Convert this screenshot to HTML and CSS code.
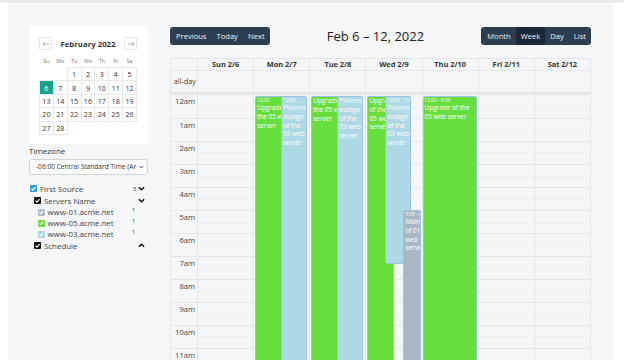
FILE: index.html
```html
<!DOCTYPE html>
<html>
<head>
	<link rel="stylesheet" href="styles.css">
</head>
<body>
	<div class="topbar"></div>
	<div class="page">
		<aside class="side">
			<div class="mini">
				<div class="mini-head">
					<span class="arrow"><svg viewBox="0 0 9 6" width="8" height="6"><path d="M8.5 3H1M3.5 0.6L1 3l2.5 2.4" fill="none" stroke="#999" stroke-width="0.8"/></svg></span>
					<b>February 2022</b>
					<span class="arrow"><svg viewBox="0 0 9 6" width="8" height="6"><path d="M0.5 3H8M5.5 0.6L8 3 5.5 5.4" fill="none" stroke="#999" stroke-width="0.8"/></svg></span>
				</div>
				<table class="mini-grid">
					<tr class="dow"><th>Su</th><th>Mo</th><th>Tu</th><th>We</th><th>Th</th><th>Fr</th><th>Sa</th></tr>
					<tr><td class="empty"></td><td class="empty"></td><td>1</td><td>2</td><td>3</td><td>4</td><td>5</td></tr>
					<tr><td class="sel">6</td><td>7</td><td>8</td><td>9</td><td>10</td><td>11</td><td>12</td></tr>
					<tr><td>13</td><td>14</td><td>15</td><td>16</td><td>17</td><td>18</td><td>19</td></tr>
					<tr><td>20</td><td>21</td><td>22</td><td>23</td><td>24</td><td>25</td><td>26</td></tr>
					<tr><td>27</td><td>28</td><td class="empty"></td><td class="empty"></td><td class="empty"></td><td class="empty"></td><td class="empty"></td></tr>
				</table>
			</div>

			<div class="tz-label">Timezone</div>
			<div class="tz-select">
				<span>-06:00 Central Standard Time (America/Chicago)</span>
				<svg viewBox="0 0 8 5" width="5" height="4"><polyline points="1,1 4,4 7,1" fill="none" stroke="#333" stroke-width="1.4"/></svg>
			</div>

			<div class="tree">
				<div class="node lvl0">
					<span class="cb cb-blue"><svg viewBox="0 0 8 8"><polyline points="1.8,4.2 3.4,5.8 6.4,2.4" fill="none" stroke="#fff" stroke-width="1.3"/></svg></span>
					First Source
					<span class="right"><span class="count">3</span><svg class="chev" viewBox="0 0 8 5"><polyline points="1,1 4,4 7,1"/></svg></span>
				</div>
				<div class="node lvl1">
					<span class="cb cb-black"><svg viewBox="0 0 8 8"><polyline points="1.8,4.2 3.4,5.8 6.4,2.4" fill="none" stroke="#fff" stroke-width="1.3"/></svg></span>
					Servers Name
					<span class="right"><svg class="chev" viewBox="0 0 8 5"><polyline points="1,1 4,4 7,1"/></svg></span>
				</div>
				<div class="leaf">
					<span class="cb small cb-slate"><svg viewBox="0 0 8 8"><polyline points="1.8,4.2 3.4,5.8 6.4,2.4" fill="none" stroke="#fff" stroke-width="1.3"/></svg></span>
					www-01.acme.net
					<span class="right"><span class="count up">1</span></span>
				</div>
				<div class="leaf">
					<span class="cb small cb-green"><svg viewBox="0 0 8 8"><polyline points="1.8,4.2 3.4,5.8 6.4,2.4" fill="none" stroke="#fff" stroke-width="1.3"/></svg></span>
					www-05.acme.net
					<span class="right"><span class="count up">1</span></span>
				</div>
				<div class="leaf">
					<span class="cb small cb-light"><svg viewBox="0 0 8 8"><polyline points="1.8,4.2 3.4,5.8 6.4,2.4" fill="none" stroke="#fff" stroke-width="1.3"/></svg></span>
					www-03.acme.net
					<span class="right"><span class="count up">1</span></span>
				</div>
				<div class="node lvl1">
					<span class="cb cb-black"><svg viewBox="0 0 8 8"><polyline points="1.8,4.2 3.4,5.8 6.4,2.4" fill="none" stroke="#fff" stroke-width="1.3"/></svg></span>
					Schedule
					<span class="right"><svg class="chev" viewBox="0 0 8 5"><polyline points="1,4 4,1 7,4"/></svg></span>
				</div>
			</div>
		</aside>

		<main class="cal">
			<div class="toolbar">
				<div class="btn-group">
					<span class="btn">Previous</span><span class="btn">Today</span><span class="btn">Next</span>
				</div>
				<h2 class="title">Feb 6 – 12, 2022</h2>
				<div class="btn-group">
					<span class="btn">Month</span><span class="btn active">Week</span><span class="btn">Day</span><span class="btn">List</span>
				</div>
			</div>

			<div class="grid">
				<div class="row head">
					<div class="axis"></div>
					<div class="cell">Sun 2/6</div>
					<div class="cell">Mon 2/7</div>
					<div class="cell">Tue 2/8</div>
					<div class="cell">Wed 2/9</div>
					<div class="cell">Thu 2/10</div>
					<div class="cell">Fri 2/11</div>
					<div class="cell">Sat 2/12</div>
				</div>
				<div class="row allday">
					<div class="axis">all-day</div>
					<div class="cell"></div><div class="cell"></div><div class="cell"></div><div class="cell"></div>
					<div class="cell"></div><div class="cell"></div><div class="cell"></div>
				</div>
				<div class="divider"></div>

				<div class="body">
					<div class="slats" id="slats"></div>
					<div class="cols">
						<div class="col"></div>
						<div class="col">
							<div class="ev green" style="top:1px;left:1px;width:40px;height:320px"><div class="ev-time">12:00</div><div class="ev-title">Upgrade the 05 web server</div></div>
							<div class="ev blue" style="top:1px;left:27px;width:26px;height:320px"><div class="ev-time">12:00</div><div class="ev-title">Planned outage of the 03 web server</div></div>
						</div>
						<div class="col">
							<div class="ev green" style="top:1px;left:1px;width:40px;height:320px"><div class="ev-title">Upgrade the 05 web server</div></div>
							<div class="ev blue" style="top:1px;left:27px;width:26px;height:320px"><div class="ev-title">Planned outage of the 03 web server</div></div>
						</div>
						<div class="col">
							<div class="ev green" style="top:1px;left:1px;width:27px;height:320px"><div class="ev-title">Upgrade of the 05 web server</div></div>
							<div class="ev blue" style="top:1px;left:19px;width:26px;height:168px"><div class="ev-time">12:00 - 7:20</div><div class="ev-title">Planned outage of the 03 web server</div></div>
							<div class="ev slate" style="top:115px;left:37px;width:18px;height:210px"><div class="ev-time">5:00 - 6:00</div><div class="ev-title">Maintenance of 01 web server</div></div>
						</div>
						<div class="col">
							<div class="ev green" style="top:1px;left:0;width:54px;height:320px"><div class="ev-time">12:00 - 9:35</div><div class="ev-title">Upgrade of the 05 web server</div></div>
						</div>
						<div class="col"></div>
						<div class="col"></div>
					</div>
				</div>
			</div>
		</main>
	</div>

	<script>
		var labels = ['12am','1am','2am','3am','4am','5am','6am','7am','8am','9am','10am','11am','12pm','1pm'];
		var slats = document.getElementById('slats');
		for (var i = 0; i < labels.length; i++) {
			slats.innerHTML += '<div class="slat hour"><div class="axis">' + labels[i] + '</div><div class="lane"></div></div>'
				+ '<div class="slat half"><div class="axis"></div><div class="lane"></div></div>';
		}
	</script>
</body>
</html>
```

FILE: styles.css
```css
body{
	margin: 0;
	background: #fff;
	color: #333;
	font-family: "Open Sans", "DejaVu Sans", sans-serif;
}
.topbar{
	height: 3px;
	background: #ebebeb;
	margin-bottom: 1px;
}
.page{
	margin-left: 8px;
	width: 605px;
	box-sizing: border-box;
	padding: 22px 22px 0 21px;
	background: #f5f6f8;
	display: flex;
	gap: 22px;
}

/* sidebar */
.side{
	width: 119px;
	flex: none;
}
.mini{
	background: #fff;
	padding: 11px 11px 9px 10px;
}
.mini-head{
	display: flex;
	justify-content: space-between;
	align-items: center;
	height: 13px;
}
.mini-head b{
	font-size: 7.8px;
	font-weight: 700;
	color: #333;
}
.arrow{
	width: 11px;
	height: 11px;
	border: 1px solid #e4e4e4;
	border-radius: 2px;
	display: flex;
	align-items: center;
	justify-content: center;
}
.mini-grid{
	border-collapse: collapse;
	width: 98px;
	margin-top: 5px;
	table-layout: fixed;
}
.mini-grid th{
	font-size: 5.4px;
	font-weight: 400;
	color: #777;
	height: 12px;
	padding: 0;
}
.mini-grid td{
	border: 1px solid #e8e8e8;
	height: 12.4px;
	padding: 0;
	font-size: 7.2px;
	text-align: center;
	color: #333;
}
.mini-grid td.empty{
	border: none;
}
.mini-grid td.sel{
	background: #17a38b;
	color: #fff;
}

.tz-label{
	margin-top: 1px;
	font-size: 8px;
	line-height: 11px;
	color: #333;
}
.tz-select{
	margin-top: 3px;
	height: 16px;
	box-sizing: border-box;
	border: 1px solid #cfd3d8;
	border-radius: 3px;
	background: #fff;
	display: flex;
	align-items: center;
	padding: 0 3px 0 6px;
	gap: 3px;
	font-size: 6.6px;
	color: #333;
}
.tz-select span{
	flex: 1;
	white-space: nowrap;
	overflow: hidden;
}

.tree{
	margin-top: 8px;
	padding-right: 3px;
	font-size: 7.9px;
	color: #444;
}
.node, .leaf{
	display: flex;
	align-items: center;
	gap: 3px;
}
.node{ height: 12px; }
.leaf{ height: 11px; padding-left: 9px; }
.lvl0{ padding-left: 1px; }
.lvl1{ padding-left: 5px; }
.cb{
	width: 7px;
	height: 7px;
	border-radius: 1px;
	display: inline-flex;
	flex: none;
}
.cb svg{ width: 100%; height: 100%; }
.cb.small{ width: 6.5px; height: 6.5px; }
.cb-blue{ background: #2f9fd6; }
.cb-black{ background: #111; }
.cb-slate{ background: #aebfd0; }
.cb-green{ background: #66de3e; }
.cb-light{ background: #add8e6; }
.right{
	margin-left: auto;
	display: flex;
	align-items: center;
	gap: 2px;
}
.count{
	font-size: 5.4px;
	color: #222;
	margin-right: 10px;
}
.node .count{ margin-right: 0; }
.count.up{ position: relative; top: -2px; }
.chev{
	width: 7px;
	height: 5px;
	fill: none;
	stroke: #111;
	stroke-width: 1.7;
}

/* calendar */
.cal{
	flex: 1;
}
.toolbar{
	margin-top: 1px;
	height: 18px;
	display: flex;
	align-items: center;
	justify-content: space-between;
}
.btn-group{
	display: flex;
	background: #2c3e50;
	border-radius: 3px;
	overflow: hidden;
}
.btn{
	font-size: 7.6px;
	line-height: 18px;
	padding: 0 5px;
	color: #eef1f4;
}
.btn:first-child{ padding-left: 6px; }
.btn.active{ background: #1b2837; }
.title{
	margin: 0;
	font-size: 13px;
	font-weight: 500;
	color: #222;
}

.grid{
	margin-top: 13px;
	border: 1px solid #e3e5e8;
}
.row{
	display: grid;
	grid-template-columns: 26px repeat(7, 1fr);
	border-bottom: 1px solid #e3e5e8;
}
.row .cell{
	border-left: 1px solid #e3e5e8;
}
.head{
	height: 11px;
	font-size: 7.4px;
	font-weight: 700;
	line-height: 11px;
	text-align: center;
	color: #333;
}
.allday{
	height: 21px;
}
.allday .axis{
	font-size: 7.3px;
	line-height: 21px;
	text-align: right;
	padding-right: 1px;
	color: #444;
}
.divider{
	height: 2px;
	background: #e6e8eb;
}
.body{
	position: relative;
}
.slat{
	display: grid;
	grid-template-columns: 26px 1fr;
	height: 11.5px;
	box-sizing: border-box;
}
.slat .axis{
	font-size: 7.6px;
	line-height: 10px;
	text-align: right;
	padding: 1px 2px 0 0;
	color: #444;
}
.slat.hour .axis, .slat.hour .lane{
	border-top: 1px solid #e3e5e8;
}
.slat.half .lane{
	border-top: 1px dotted #e6e8eb;
}
.slat:first-child .axis, .slat:first-child .lane{
	border-top: none;
}
.cols{
	position: absolute;
	top: 0;
	bottom: 0;
	left: 26px;
	right: 0;
	display: grid;
	grid-template-columns: repeat(7, 1fr);
}
.col{
	position: relative;
	border-left: 1px solid #e3e5e8;
	overflow: hidden;
}
.ev{
	position: absolute;
	box-sizing: border-box;
	border: 1px solid #9cc2e6;
	border-radius: 2px;
	padding: 0 1px;
	overflow: hidden;
	color: #fff;
}
.ev.green{ background: #66de3e; }
.ev.blue{ background: #add8e6; }
.ev.slate{ background: #a9b7c7; padding: 0 0 0 1px; }
.ev-time{
	font-size: 4.8px;
	line-height: 7px;
	white-space: nowrap;
}
.ev-title{
	font-size: 6.4px;
	line-height: 8.8px;
}
```
